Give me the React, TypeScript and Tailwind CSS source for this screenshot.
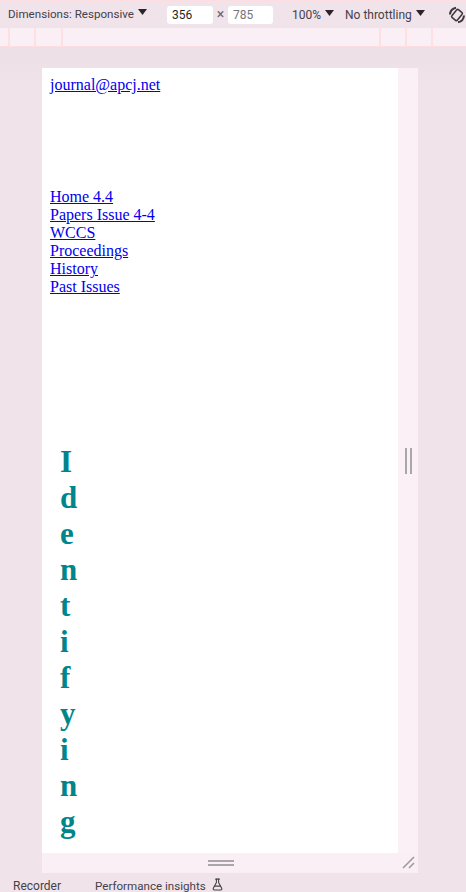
import { FlaskConical } from 'lucide-react'

/* Devtools device toolbar wrapped around a narrow page preview. */
const NAV = ['Home 4.4', 'Papers Issue 4-4', 'WCCS', 'Proceedings', 'History', 'Past Issues']
const HEADING = 'Identifying'.split('')

function Caret() {
  return (
    <svg width="9" height="6" viewBox="0 0 9 6" className="ml-[4px] mb-[4px] shrink-0">
      <path d="M0 0h9L4.5 6z" fill="#2b2528" />
    </svg>
  )
}

function Toolbar() {
  return (
    <div className="h-[28px] flex items-center bg-[#f0e4ea] border-t border-[#fbdde2] text-[12px] text-[#45404a] relative overflow-hidden">
      <span className="ml-[8px] flex items-center w-[159px] text-[11.6px]">
        Dimensions: Responsive
        <Caret />
      </span>
      <span className="w-[46px] h-[18px] rounded-[3px] bg-white text-[#1f1f1f] pl-[5px] leading-[18px]">356</span>
      <span className="w-[15px] text-center text-[14px] text-[#6b666c]">×</span>
      <span className="w-[45px] h-[18px] rounded-[3px] bg-white text-[#77737a] pl-[5px] leading-[18px]">785</span>
      <span className="ml-[19px] flex items-center w-[53px]">
        100%
        <Caret />
      </span>
      <span className="flex items-center">
        No throttling
        <Caret />
      </span>
      <svg width="18" height="20" viewBox="0 0 18 20" className="absolute left-[448px] top-[4px]" fill="none" stroke="#3c363a" strokeWidth="1.5">
        <rect x="5.5" y="5" width="7" height="10" rx="1.2" transform="rotate(40 9 10)" />
        <path d="M2 9.5a7.5 7.5 0 0 1 6-6.8M16 10.5a7.5 7.5 0 0 1-6 6.8" strokeWidth="2" />
      </svg>
    </div>
  )
}

function Ruler() {
  return (
    <div className="h-[19px] flex bg-[#f9eff5] border-b border-[#fbdde2]">
      <div className="flex h-[18px]">
        <span className="w-[8px] border-r-2 border-[#fddfe4] box-content" />
        <span className="w-[24px] border-r-2 border-[#fddfe4] box-content" />
        <span className="w-[25px] border-r-2 border-[#fddfe4] box-content" />
      </div>
      <div className="ml-auto flex h-[18px] mr-[33px]">
        <span className="w-[26px] border-l-2 border-[#fddfe4]" />
        <span className="w-[26px] border-l-2 border-[#fddfe4]" />
        <span className="w-[0px] border-l-2 border-[#fddfe4]" />
      </div>
    </div>
  )
}

function PagePreview() {
  return (
    <div className="w-[356px] h-[785px] bg-white overflow-hidden pt-[8px] pl-[8px] font-['Liberation_Serif',serif] text-[16px] leading-[18px] text-black">
      <a href="#" className="block text-[#0000ee] underline">journal@apcj.net</a>
      <ul className="mt-[94px]">
        {NAV.map((item) => (
          <li key={item}>
            <a href="#" className="text-[#0000ee] underline">{item}</a>
          </li>
        ))}
      </ul>
      <h1 className="mt-[148px] ml-[10px] text-[31px] font-bold leading-[36px] text-[#00858b]">
        {HEADING.map((ch, i) => (
          <span key={i} className="block">{ch}</span>
        ))}
      </h1>
    </div>
  )
}

export default function App() {
  return (
    <div className="w-[466px] h-[892px] overflow-hidden flex flex-col bg-[#f0e4ea] font-['Roboto',sans-serif]">
      <Toolbar />
      <Ruler />
      <div className="flex-1 pt-[21px] pl-[42px] bg-gradient-to-b from-[#ecdfe6] to-[#f0e4ea] to-[5%]">
        <div className="flex w-[376px]">
          <PagePreview />
          <div className="w-[20px] bg-[#fbf0f6] flex items-center justify-center gap-[3px]">
            <span className="w-[2px] h-[26px] bg-[#aaa5a9]" />
            <span className="w-[2px] h-[26px] bg-[#aaa5a9]" />
          </div>
        </div>
        <div className="w-[376px] h-[20px] bg-[#f9eff5] flex items-center relative">
          <div className="ml-[166px] w-[26px] flex flex-col gap-[2px]">
            <span className="h-[2px] bg-[#aaa5a9]" />
            <span className="h-[2px] bg-[#aaa5a9]" />
          </div>
          <svg width="14" height="14" viewBox="0 0 14 14" className="absolute right-[2px] bottom-[3px]" stroke="#a09ba0" strokeWidth="1.6">
            <path d="M1 12L12 1M7 12l5-5" />
          </svg>
        </div>
      </div>
      <div className="h-[19px] shrink-0 flex items-start border-t border-[#fbdde2] bg-[#f0e4ea] text-[12px] text-[#45404a] pl-[13px] pt-[4px] overflow-hidden leading-[16px]">
        <span>Recorder</span>
        <span className="ml-[34px] text-[11.6px]">Performance insights</span>
        <FlaskConical size={13} className="ml-[5px] text-[#45404a]" />
      </div>
    </div>
  )
}
